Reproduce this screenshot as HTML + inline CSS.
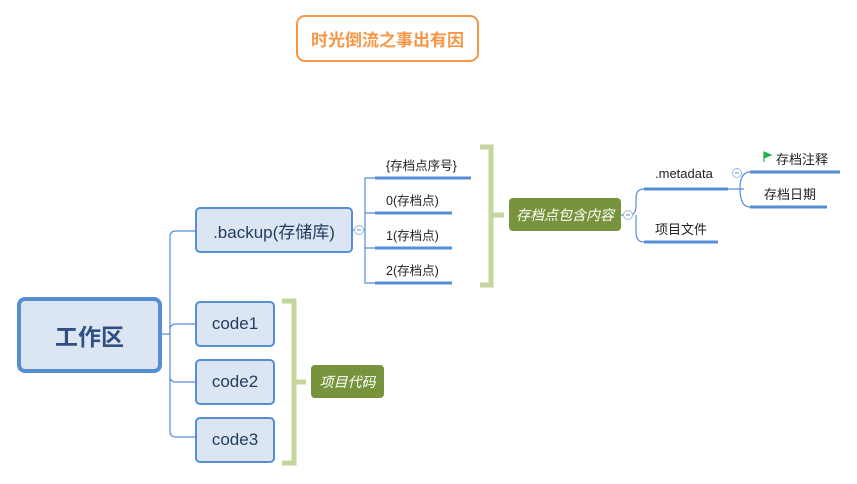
<!DOCTYPE html>
<html><head><meta charset="utf-8"><style>
body{margin:0;width:857px;height:484px;background:#fff;position:relative;overflow:hidden;font-family:"Liberation Sans","Noto Sans CJK SC",sans-serif}
.a{position:absolute;box-sizing:border-box;display:flex;align-items:center;justify-content:center;white-space:nowrap}
.t{position:absolute;white-space:nowrap;font-size:12.5px;color:#222}
.blue{background:#dce6f2;border:2px solid #558ed5;border-radius:5px;color:#1f3b5e;font-size:17px}
.green{background:#77933c;color:#fff;font-style:italic;font-size:14px;border-radius:4px}
svg{position:absolute;left:0;top:0}
</style></head><body>
<svg width="857" height="484" fill="none">
<g stroke="#558ed5" stroke-width="1.2">
<path d="M161 334 H170 M195 231 H176 Q170 231 170 237 V431 Q170 437 176 437 H195 M170 330 Q170 324 176 324 H195 M170 376 Q170 382 176 382 H195"/>
<path d="M353 230 H365 M375 178 H365 V283 H375 M365 213 H375 M365 248 H375"/>
<path d="M620 215 H630 Q636 215 636 205 V198 Q636 189 644 189 M636 215 V232 Q636 242 644 242"/>
<path d="M728 189 H744 M740 189 Q740 172 750 172 M740 189 Q740 207 750 207"/>
</g>
<g stroke="#558ed5" stroke-width="3">
<path d="M375 178 H471 M375 213 H452 M375 248 H452 M375 283 H452"/>
<path d="M644 189 H728 M644 242 H718 M750 172 H840 M750 207 H827"/>
</g>
<g stroke="#c3d69b" stroke-width="5">
<path d="M282 301 H294 V463 H282 M294 382 H306"/>
<path d="M480 147 H491 V285 H480 M491 215 H504"/>
</g>
<g stroke="#9bb7e6" stroke-width="1" fill="#fff">
<circle cx="359" cy="230" r="4.5"/><circle cx="628" cy="215" r="4.5"/><circle cx="737" cy="173" r="4.5"/>
</g>
<path d="M357 230h4M626 215h4M735 173h4" stroke="#558ed5"/>
<path d="M764 152 V162 M764 152 L771 155 L764 158Z" stroke="#22b14c" fill="#22b14c" stroke-width="1.2"/>
</svg>
<div class="a" style="left:296px;top:15px;width:183px;height:47px;border:2px solid #f79646;border-radius:9px;color:#f79646;font-weight:bold;font-size:17px">时光倒流之事出有因</div>
<div class="a" style="left:17px;top:297px;width:145px;height:76px;border:4px solid #558ed5;border-radius:8px;background:#dce6f2;color:#2f5080;font-weight:bold;font-size:23px">工作区</div>
<div class="a blue" style="left:195px;top:207px;width:158px;height:46px">.backup(存储库)</div>
<div class="a blue" style="left:195px;top:301px;width:80px;height:46px">code1</div>
<div class="a blue" style="left:195px;top:359px;width:80px;height:46px">code2</div>
<div class="a blue" style="left:195px;top:417px;width:80px;height:46px">code3</div>
<div class="a green" style="left:311px;top:365px;width:73px;height:33px">项目代码</div>
<div class="a green" style="left:509px;top:198px;width:112px;height:33px">存档点包含内容</div>
<div class="t" style="left:386px;top:155px">{存档点序号}</div>
<div class="t" style="left:386px;top:190px">0(存档点)</div>
<div class="t" style="left:386px;top:225px">1(存档点)</div>
<div class="t" style="left:386px;top:260px">2(存档点)</div>
<div class="t" style="left:655px;top:166px;font-size:13px">.metadata</div>
<div class="t" style="left:655px;top:219px;font-size:13px">项目文件</div>
<div class="t" style="left:776px;top:149px;font-size:13px">存档注释</div>
<div class="t" style="left:764px;top:184px;font-size:13px">存档日期</div>
</body></html>
